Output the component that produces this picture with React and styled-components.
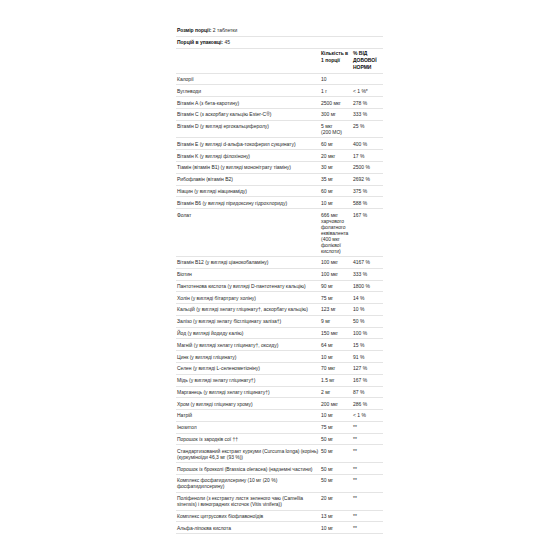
import React from "react";
import styled, { createGlobalStyle } from "styled-components";

const Global = createGlobalStyle`
  html, body { margin: 0; padding: 0; background: #ffffff; }
  body { font-family: "Liberation Sans", Arial, sans-serif; }
`;

const Page = styled.div`
  width: 560px;
  height: 560px;
  padding: 25px 0 0 176px;
  box-sizing: border-box;
`;

const Table = styled.div`
  width: 207px;
  display: flex;
  flex-direction: column;
  font-size: 5px;
  line-height: 6px;
  letter-spacing: -0.02px;
  color: #2a2a2a;
`;

const Row = styled.div`
  display: grid;
  grid-template-columns: 144px 32px 31px;
  border-bottom: 1px solid #e4e4e4;
  box-sizing: border-box;
`;

const Cell = styled.div`
  padding: ${(p) => (p.$head ? "1.5px 1px" : p.$name ? "2.4px 0 2.4px 1px" : "2.4px 1px")};
  grid-column: ${(p) => (p.$wide ? "1 / -1" : "auto")};
  font-weight: ${(p) => (p.$head ? 700 : 400)};
  color: ${(p) => (p.$head ? "#111" : "#2a2a2a")};
  line-height: ${(p) => (p.$head ? "7px" : "6px")};
  text-transform: ${(p) => (p.$upper ? "uppercase" : "none")};
  overflow-wrap: break-word;
`;

const Label = styled.span`
  font-weight: 700;
  color: #111;
`;

const rows = [
  ["Калорії", "10", ""],
  ["Вуглеводи", "1 г", "< 1 %*"],
  ["Вітамін A (з бета-каротину)", "2500 мкг", "278 %"],
  ["Вітамін C (з аскорбату кальцію Ester-C®)", "300 мг", "333 %"],
  ["Вітамін D (у вигляді ергокальциферолу)", "5 мкг (200\u00a0МО)", "25 %"],
  ["Вітамін E (у вигляді d-альфа-токоферил сукцинату)", "60 мг", "400 %"],
  ["Вітамін K (у вигляді філохінону)", "20 мкг", "17 %"],
  ["Тіамін (вітамін B1) (у вигляді мононітрату тіаміну)", "30 мг", "2500 %"],
  ["Рибофлавін (вітамін B2)", "35 мг", "2692 %"],
  ["Ніацин (у вигляді ніацинаміду)", "60 мг", "375 %"],
  ["Вітамін B6 (у вигляді піридоксину гідрохлориду)", "10 мг", "588 %"],
  ["Фолат", "666 мкг харчового фолатного еквівалента (400 мкг фолієвої кислоти)", "167 %"],
  ["Вітамін B12 (у вигляді ціанокобаламіну)", "100 мкг", "4167 %"],
  ["Біотин", "100 мкг", "333 %"],
  ["Пантотенова кислота (у вигляді D-пантотенату кальцію)", "90 мг", "1800 %"],
  ["Холін (у вигляді бітартрату холіну)", "75 мг", "14 %"],
  ["Кальцій (у вигляді хелату гліцинату†, аскорбату кальцію)", "123 мг", "10 %"],
  ["Залізо (у вигляді хелату бісгліцинату заліза†)", "9 мг", "50 %"],
  ["Йод (у вигляді йодиду калію)", "150 мкг", "100 %"],
  ["Магній (у вигляді хелату гліцинату†, оксиду)", "64 мг", "15 %"],
  ["Цинк (у вигляді гліцинату)", "10 мг", "91 %"],
  ["Селен (у вигляді L-селенометіоніну)", "70 мкг", "127 %"],
  ["Мідь (у вигляді хелату гліцинату†)", "1.5 мг", "167 %"],
  ["Марганець (у вигляді хелату гліцинату†)", "2 мг", "87 %"],
  ["Хром (у вигляді гліцинату хрому)", "200 мкг", "286 %"],
  ["Натрій", "10 мг", "< 1 %"],
  ["Інозитол", "75 мг", "**"],
  ["Порошок із зародків сої ††", "50 мг", "**"],
  ["Стандартизований екстракт куркуми (Curcuma longa) (корінь) (куркуміноїди 46,3 мг (93 %))", "50 мг", "**"],
  ["Порошок із брокколі (Brassica oleracea) (надземні частини)", "50 мг", "**"],
  ["Комплекс фосфатидилсерину (10 мг (20 %) фосфатидилсерину)", "50 мг", "**"],
  ["Поліфеноли (з екстракту листя зеленого чаю (Camellia sinensis) і виноградних кісточок (Vitis vinifera))", "20 мг", "**"],
  ["Комплекс цитрусових біофлавоноїдів", "13 мг", "**"],
  ["Альфа-ліпоєва кислота", "10 мг", "**"],
];

export default function App() {
  return (
    <>
      <Global />
      <Page>
        <Table>
          <Row>
            <Cell $wide>
              <Label>Розмір порції:</Label> 2 таблетки
            </Cell>
          </Row>
          <Row>
            <Cell $wide>
              <Label>Порцій в упаковці:</Label> 45
            </Cell>
          </Row>
          <Row>
            <Cell $head />
            <Cell $head>Кількість в 1 порції</Cell>
            <Cell $head $upper>% від добової норми</Cell>
          </Row>
          {rows.map(([name, amount, dv]) => (
            <Row key={name}>
              <Cell $name>{name}</Cell>
              <Cell>{amount}</Cell>
              <Cell>{dv}</Cell>
            </Row>
          ))}
        </Table>
      </Page>
    </>
  );
}
